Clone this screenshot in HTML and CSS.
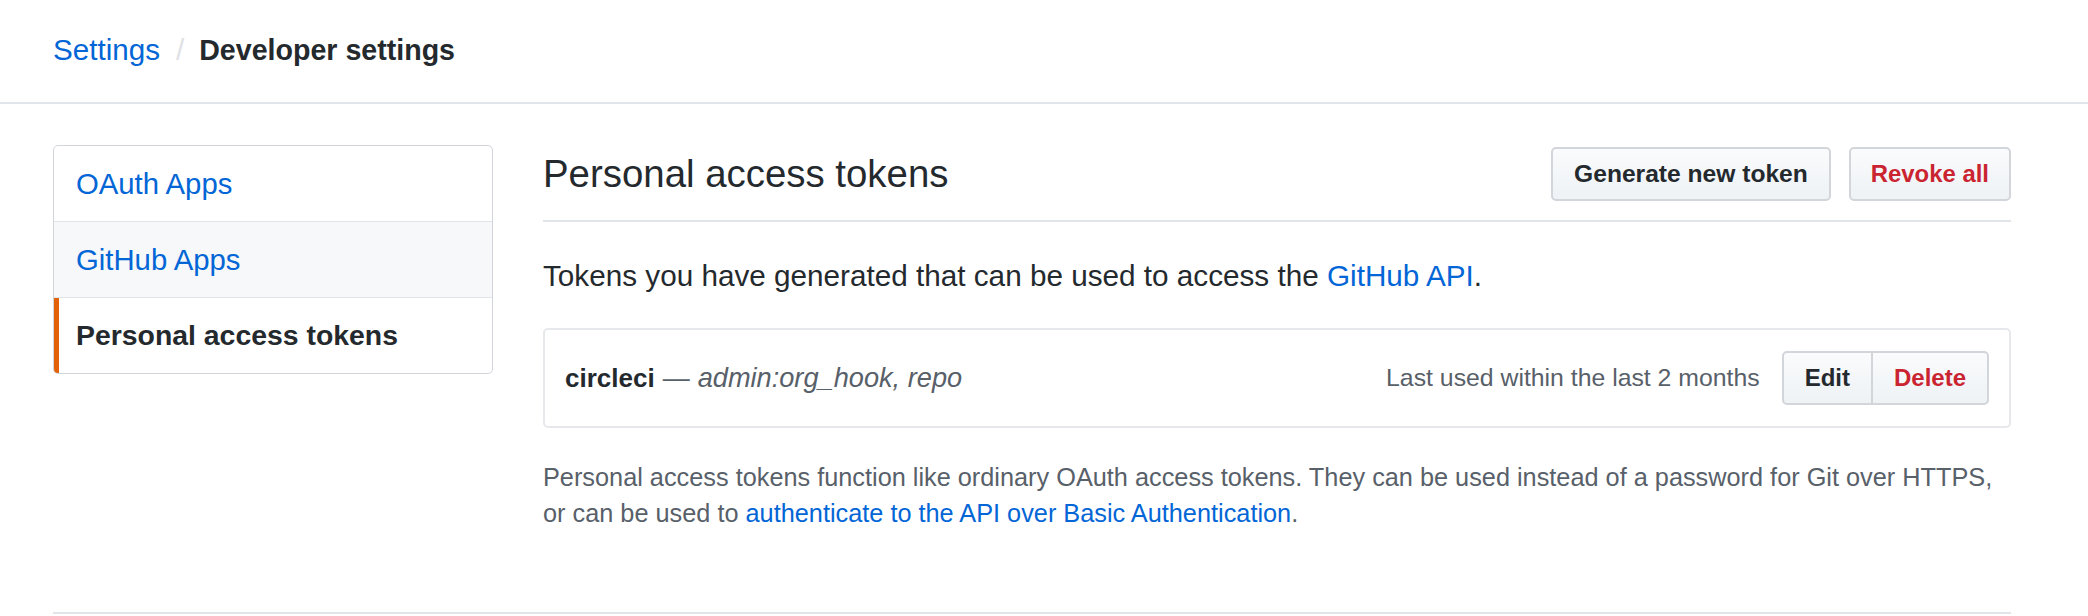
FILE: index.html
```html
<!DOCTYPE html>
<html lang="en">
<head>
<meta charset="utf-8">
<title>Personal access tokens</title>
<link rel="stylesheet" href="styles.css">
</head>
<body>
<header class="page-head">
  <nav class="breadcrumb">
    <a class="crumb-link" href="#">Settings</a><span class="crumb-sep">/</span><strong class="crumb-current">Developer settings</strong>
  </nav>
</header>

<div class="layout">
  <aside class="menu">
    <a class="menu-item" href="#">OAuth Apps</a>
    <a class="menu-item menu-item-hover" href="#">GitHub Apps</a>
    <a class="menu-item menu-item-selected" href="#">Personal access tokens</a>
  </aside>

  <main class="content">
    <div class="subhead">
      <h2 class="subhead-title">Personal access tokens</h2>
      <div class="subhead-actions">
        <a class="btn btn-generate" href="#">Generate new token</a>
        <a class="btn btn-danger btn-revoke" href="#">Revoke all</a>
      </div>
    </div>

    <p class="intro">Tokens you have generated that can be used to access the <a class="link" href="#">GitHub API</a>.</p>

    <div class="token-box">
      <div class="token-info">
        <strong class="token-name">circleci</strong><span class="token-dash">—</span><em class="token-scopes">admin:org_hook, repo</em>
      </div>
      <div class="token-meta">
        <span class="last-used">Last used within the last 2 months</span>
        <div class="btn-group">
          <a class="btn btn-group-first" href="#">Edit</a><a class="btn btn-danger btn-group-last" href="#">Delete</a>
        </div>
      </div>
    </div>

    <p class="note"><span class="note-line">Personal access tokens function like ordinary OAuth access tokens. They can be used instead of a password for Git over HTTPS,</span><br><span class="note-line">or can be used to</span> <a class="link" href="#">authenticate to the API over Basic Authentication</a><span class="note-line">.</span></p>
  </main>
</div>

<footer class="page-foot"></footer>
</body>
</html>
```

FILE: styles.css
```css
* {
  box-sizing: border-box;
}

html, body {
  margin: 0;
  padding: 0;
  background: #ffffff;
}

body {
  font-family: "Liberation Sans", Arial, sans-serif;
  color: #24292e;
  width: 2088px;
  overflow: hidden;
}

a {
  text-decoration: none;
}

/* ---------- header / breadcrumb ---------- */
.page-head {
  border-bottom: 2px solid #e1e4e8;
  padding: 28px 0 30px 53px;
}

.breadcrumb {
  display: flex;
  align-items: baseline;
  height: 44px;
  line-height: 44px;
  font-size: 29.6px;
}

.crumb-link {
  color: #0366d6;
}

.crumb-sep {
  color: #dfe2e5;
  padding: 0 15px 0 16px;
}

.crumb-current {
  font-weight: 700;
  font-size: 28.6px;
  color: #24292e;
}

/* ---------- two column layout ---------- */
.layout {
  display: flex;
  gap: 50px;
  margin: 41px 0 0 53px;
  width: 1958px;
  align-items: flex-start;
}

/* ---------- side menu ---------- */
.menu {
  flex: 0 0 440px;
  border: 1px solid #d1d5da;
  border-radius: 5px;
  overflow: hidden;
  display: flex;
  flex-direction: column;
}

.menu-item {
  position: relative;
  display: block;
  height: 76px;
  line-height: 75px;
  padding-left: 22px;
  font-size: 29.3px;
  color: #0366d6;
  border-top: 1px solid #e1e4e8;
}

.menu-item:first-child {
  border-top: 0;
  height: 75px;
  line-height: 75px;
}

.menu-item-hover {
  background: #f6f8fa;
}

.menu-item-selected {
  color: #24292e;
  font-weight: 700;
  font-size: 28.4px;
}

.menu-item-selected::before {
  content: "";
  position: absolute;
  left: 0;
  top: 0;
  bottom: 0;
  width: 5px;
  background: #e36209;
}

/* ---------- main content ---------- */
.content {
  flex: 1 1 auto;
  min-width: 0;
}

.subhead {
  display: flex;
  align-items: center;
  justify-content: space-between;
  padding: 2px 0 19px 0;
  border-bottom: 2px solid #e1e4e8;
}

.subhead-title {
  margin: 0;
  font-size: 38.4px;
  font-weight: 400;
  line-height: 48px;
  color: #24292e;
}

.subhead-actions {
  display: flex;
  gap: 18px;
}

.btn {
  display: inline-block;
  height: 54px;
  line-height: 50px;
  padding: 0 21px;
  font-size: 24px;
  font-weight: 700;
  color: #24292e;
  white-space: nowrap;
  background: linear-gradient(#fafbfc, #eff3f6 90%);
  border: 2px solid #d2d5d9;
  border-radius: 5px;
}

.btn-generate {
  font-size: 24.6px;
}

.btn-revoke {
  font-size: 23.9px;
  padding: 0 20px;
}

.btn-danger {
  color: #cb2431;
}

.intro {
  margin: 32px 0 0 0;
  font-size: 29.7px;
  line-height: 44px;
  color: #24292e;
}

.link {
  color: #0366d6;
}

/* ---------- token row ---------- */
.token-box {
  margin-top: 30px;
  display: flex;
  align-items: center;
  justify-content: space-between;
  padding: 21px 20px 21px 20px;
  border: 2px solid #e6e8eb;
  border-radius: 5px;
}

.token-info {
  display: flex;
  align-items: baseline;
  gap: 8px;
  font-size: 27px;
  line-height: 40px;
  white-space: nowrap;
}

.token-name {
  font-weight: 700;
  font-size: 26px;
  color: #24292e;
}

.token-dash {
  color: #586069;
}

.token-scopes {
  font-style: italic;
  font-size: 27.2px;
  color: #586069;
}

.token-meta {
  display: flex;
  align-items: center;
  gap: 22px;
}

.last-used {
  font-size: 24.8px;
  color: #586069;
  white-space: nowrap;
}

.btn-group {
  display: flex;
}

.btn-group-first {
  border-radius: 5px 0 0 5px;
}

.btn-group-last {
  border-left: 0;
  border-radius: 0 5px 5px 0;
}

/* ---------- note ---------- */
.note {
  margin: 31px 0 0 0;
  font-size: 25.3px;
  line-height: 36px;
  color: #586069;
}

/* ---------- footer rule ---------- */
.page-foot {
  margin: 81px 0 0 53px;
  width: 1958px;
  border-top: 2px solid #e1e4e8;
}
```
